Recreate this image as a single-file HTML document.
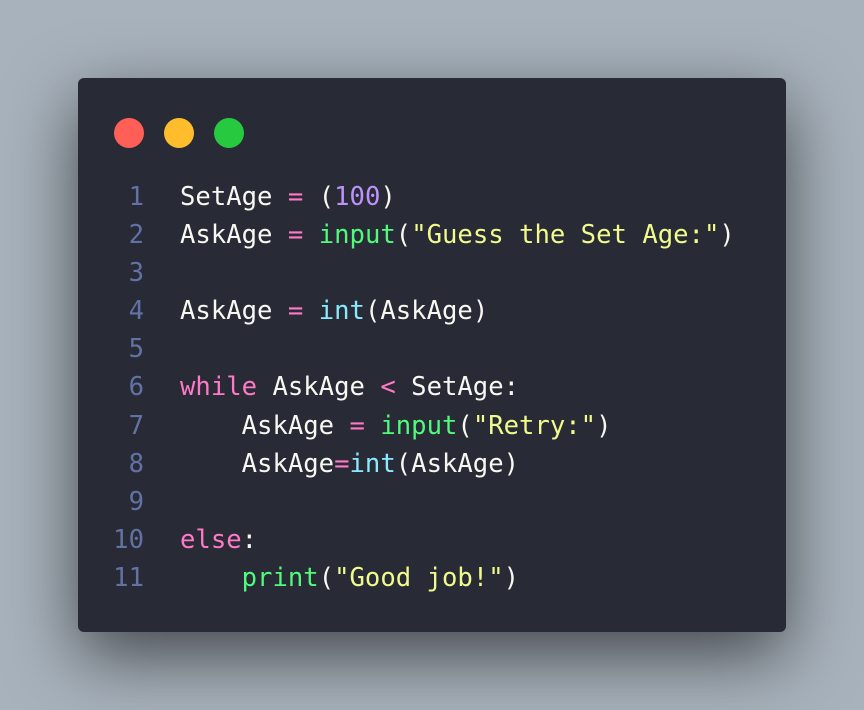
<!DOCTYPE html>
<html><head><style>
html,body{margin:0;padding:0;width:864px;height:710px;overflow:hidden;background:#a8b2bc;}
.win{position:absolute;left:78px;top:78px;width:708px;height:554px;background:#282a36;border-radius:6px;box-shadow:0 24px 70px rgba(0,0,0,0.6);}
.dot{position:absolute;top:40px;width:30px;height:30px;border-radius:50%;}
pre{position:absolute;left:0;top:100px;margin:0;font-family:"DejaVu Sans Mono",monospace;font-size:25.6px;line-height:38.1px;color:#f8f8f2;}
.ln{display:inline-block;width:66px;text-align:right;color:#6272a4;margin-right:36px;}
.p{color:#ff79c6}.n{color:#bd93f9}.g{color:#50fa7b}.c{color:#8be9fd}.y{color:#f1fa8c}
</style></head><body>
<div class="win">
<div class="dot" style="left:36px;background:#ff5f56"></div>
<div class="dot" style="left:86px;background:#ffbd2e"></div>
<div class="dot" style="left:136px;background:#27c93f"></div>
<pre><span class="ln">1</span>SetAge <span class="p">=</span> (<span class="n">100</span>)
<span class="ln">2</span>AskAge <span class="p">=</span> <span class="g">input</span>(<span class="y">"Guess the Set Age:"</span>)
<span class="ln">3</span>
<span class="ln">4</span>AskAge <span class="p">=</span> <span class="c">int</span>(AskAge)
<span class="ln">5</span>
<span class="ln">6</span><span class="p">while</span> AskAge <span class="p">&lt;</span> SetAge:
<span class="ln">7</span>    AskAge <span class="p">=</span> <span class="g">input</span>(<span class="y">"Retry:"</span>)
<span class="ln">8</span>    AskAge<span class="p">=</span><span class="c">int</span>(AskAge)
<span class="ln">9</span>
<span class="ln">10</span><span class="p">else</span>:
<span class="ln">11</span>    <span class="g">print</span>(<span class="y">"Good job!"</span>)</pre>
</div>
</body></html>
